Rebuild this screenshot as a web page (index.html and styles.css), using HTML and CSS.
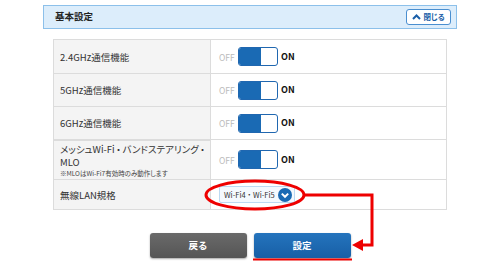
FILE: index.html
```html
<!DOCTYPE html>
<html>
<head>
    <title>基本設定</title>
    <link rel="stylesheet" href="styles.css">
</head>
<body>
    <div class="page">
        <div class="section-head">
            <span class="section-title">基本設定</span>
            <button class="close-button">
                <svg width="9" height="6" viewBox="0 0 9 6"><path d="M1 5 L4.5 1.5 L8 5" stroke="#1a5fa8" stroke-width="2" fill="none"/></svg>
                閉じる
            </button>
        </div>
        <table class="settings">
            <tr class="row-std">
                <th>2.4GHz通信機能</th>
                <td>
                    <div class="switch-line">
                        <span class="off-label">OFF</span>
                        <span class="switch"><span class="switch-on"></span></span>
                        <span class="on-label">ON</span>
                    </div>
                </td>
            </tr>
            <tr class="row-std">
                <th>5GHz通信機能</th>
                <td>
                    <div class="switch-line">
                        <span class="off-label">OFF</span>
                        <span class="switch"><span class="switch-on"></span></span>
                        <span class="on-label">ON</span>
                    </div>
                </td>
            </tr>
            <tr class="row-std">
                <th>6GHz通信機能</th>
                <td>
                    <div class="switch-line">
                        <span class="off-label">OFF</span>
                        <span class="switch"><span class="switch-on"></span></span>
                        <span class="on-label">ON</span>
                    </div>
                </td>
            </tr>
            <tr class="row-tall">
                <th>
                    <div class="long-label">メッシュWi-Fi<span class="dot">・</span>バンドステアリング<span class="dot">・</span></div>
                    <div class="long-label">MLO</div>
                    <div class="note">※MLOはWi-Fi7有効時のみ動作します</div>
                </th>
                <td>
                    <div class="switch-line">
                        <span class="off-label">OFF</span>
                        <span class="switch"><span class="switch-on"></span></span>
                        <span class="on-label">ON</span>
                    </div>
                </td>
            </tr>
            <tr class="row-select">
                <th>無線LAN規格</th>
                <td>
                    <div class="select-box">
                        <span class="select-text">Wi-Fi4・Wi-Fi5</span>
                        <svg width="14" height="14" viewBox="0 0 14 14">
                            <circle cx="7" cy="7" r="7" fill="#1a6ab4"/>
                            <path d="M3.8 5.6 L7 8.8 L10.2 5.6" stroke="#fff" stroke-width="2" fill="none"/>
                        </svg>
                    </div>
                </td>
            </tr>
        </table>
        <div class="actions">
            <button class="btn btn-back">戻る</button>
            <button class="btn btn-save">設定</button>
        </div>
    </div>
    <!-- red annotation drawn over the screenshot -->
    <svg class="annotation" width="500" height="265" viewBox="0 0 500 265">
        <ellipse cx="255" cy="195" rx="49" ry="14" stroke="#ee0000" stroke-width="3" fill="none"/>
        <polyline points="304,195 372,195 372,245 362,245" stroke="#ee0000" stroke-width="3" fill="none"/>
        <polygon points="352,245 363,239 363,251" fill="#ee0000"/>
        <line x1="253" y1="259.5" x2="352" y2="259.5" stroke="#ee0000" stroke-width="2"/>
    </svg>
</body>
</html>
```

FILE: styles.css
```css
body {
    margin: 0;
    background: #fff;
    color: #333;
    font-family: "Noto Sans CJK JP", "Liberation Sans", sans-serif;
    font-feature-settings: "palt";
    width: 500px;
    height: 265px;
    overflow: hidden;
    position: relative;
}
.page {
    padding: 5px 43px 0 43px;
}
.section-head {
    height: 24px;
    box-sizing: border-box;
    background: #dcedfb;
    border: 1px solid #8cc0ea;
    display: flex;
    align-items: center;
    justify-content: space-between;
    padding: 0 5px 0 11px;
}
.section-title {
    font-size: 9.5px;
    font-weight: bold;
    color: #222;
    line-height: 1;
}
.close-button {
    width: 45px;
    height: 16px;
    box-sizing: border-box;
    background: #fff;
    border: 1px solid #4a8fd0;
    border-radius: 3px;
    padding: 0;
    font-family: inherit;
    font-feature-settings: "palt";
    font-size: 7.5px;
    font-weight: bold;
    color: #1a5fa8;
    display: flex;
    align-items: center;
    justify-content: center;
    gap: 2px;
    line-height: 1;
}
.settings {
    margin: 10px 10px 0 10px;
    width: 394px;
    border-collapse: collapse;
    font-size: 9.5px;
    line-height: 12px;
}
.settings th,
.settings td {
    border: 1px solid #dcdcdc;
    padding: 0;
    vertical-align: middle;
}
.settings th {
    width: 150px;
    background: #f4f4f4;
    text-align: left;
    font-weight: normal;
    color: #333;
    padding-left: 6px;
    white-space: nowrap;
}
.settings td {
    padding-left: 8px;
}
.row-std {
    height: 33px;
}
.row-std:first-child {
    height: 34px;
}
.row-tall {
    height: 40px;
}
.row-tall th {
    border-top: 2px solid #dcdcdc;
}
.long-label {
    line-height: 14px;
}
.long-label + .long-label {
    margin-top: -1px;
}
.dot {
    margin: 0 1.5px;
}
.row-select {
    height: 30px;
}
.note {
    font-size: 6.5px;
    line-height: 9px;
    color: #444;
}
.switch-line {
    display: flex;
    align-items: center;
}
.off-label {
    font-size: 8.5px;
    color: #bbb;
    width: 19px;
}
.switch {
    width: 40px;
    height: 19px;
    box-sizing: border-box;
    border: 1px solid #2067b0;
    border-radius: 3px;
    background: #fff;
    display: flex;
    overflow: hidden;
}
.switch-on {
    width: 22px;
    background: #1a6ab4;
}
.on-label {
    font-size: 9px;
    font-weight: bold;
    color: #111;
    margin-left: 3px;
}
.select-box {
    width: 76px;
    height: 17px;
    box-sizing: border-box;
    border: 1px solid #bcd9f2;
    border-radius: 2px;
    background: #f4f9fe;
    display: flex;
    align-items: center;
    justify-content: space-between;
    padding: 0 2px 0 4px;
}
.select-text {
    font-size: 7.5px;
    color: #333;
    white-space: nowrap;
    font-feature-settings: normal;
}
.actions {
    display: flex;
    justify-content: center;
    gap: 7px;
    margin-top: 23px;
    margin-left: -43px;
    margin-right: -43px;
}
.btn {
    width: 97px;
    height: 25px;
    border: none;
    border-radius: 3px;
    font-family: inherit;
    font-size: 9.5px;
    font-weight: bold;
    color: #fff;
    line-height: 1;
    box-shadow: 0 1px 2px rgba(0,0,0,0.35);
}
.btn-back {
    background: linear-gradient(#6a6a6a, #555);
}
.btn-save {
    background: linear-gradient(#2574bd, #175fa6);
}
.annotation {
    position: absolute;
    top: 0;
    left: 0;
    pointer-events: none;
}
```
